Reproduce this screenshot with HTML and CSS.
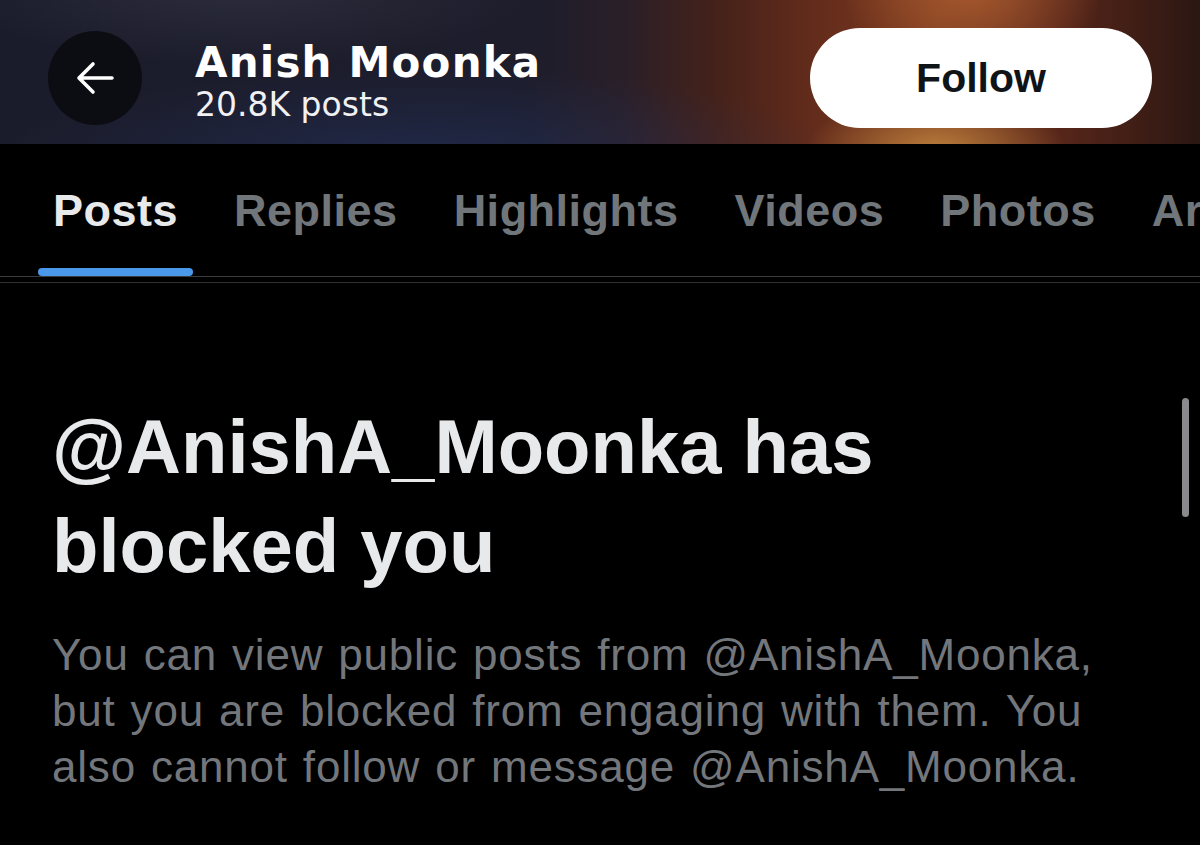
FILE: index.html
```html
<!DOCTYPE html>
<html lang="en">
<head>
<meta charset="utf-8">
<title>Anish Moonka</title>
<link rel="stylesheet" href="styles.css">
</head>
<body>
<header class="topbar">
  <button class="back" aria-label="Back">
    <svg viewBox="0 0 40 40" width="40" height="40" aria-hidden="true">
      <path d="M37 20H4M18 6L4 20l14 14" fill="none" stroke="#ffffff" stroke-width="3.6" stroke-linecap="round" stroke-linejoin="round"/>
    </svg>
  </button>
  <div class="profile">
    <div class="name">Anish Moonka</div>
    <div class="count">20.8K posts</div>
  </div>
  <button class="follow">Follow</button>
</header>
<nav class="tabs">
  <a class="tab active"><span>Posts</span></a>
  <a class="tab"><span>Replies</span></a>
  <a class="tab"><span>Highlights</span></a>
  <a class="tab"><span>Videos</span></a>
  <a class="tab"><span>Photos</span></a>
  <a class="tab"><span>Articles</span></a>
  <a class="tab"><span>Media</span></a>
</nav>
<div class="divider"></div>
<main class="blocked">
  <h1 class="title">@AnishA_Moonka has blocked you</h1>
  <p class="desc">You can view public posts from @AnishA_Moonka, but you are blocked from engaging with them. You also cannot follow or message @AnishA_Moonka.</p>
  <div class="scrollbar"></div>
</main>
</body>
</html>
```
FILE: styles.css
```css
html, body {
  margin: 0;
  padding: 0;
  background: #000000;
  height: 100%;
  overflow: hidden;
}

body {
  font-family: "Liberation Sans", Arial, sans-serif;
  color: #e7e9ea;
  position: relative;
}

.topbar {
  height: 144px;
  box-sizing: border-box;
  padding: 12px 48px 0 48px;
  display: flex;
  align-items: center;
  background:
    radial-gradient(ellipse 130px 55px at 78% 104%, rgba(200, 140, 65, 0.8), rgba(200, 140, 65, 0) 100%),
    radial-gradient(ellipse 130px 90px at 81% -8%, rgba(175, 95, 48, 0.85), rgba(175, 95, 48, 0) 100%),
    radial-gradient(ellipse 420px 90px at 35% 110%, rgba(35, 50, 95, 0.55), rgba(35, 50, 95, 0) 100%),
    radial-gradient(ellipse 300px 80px at 20% -10%, rgba(60, 60, 75, 0.5), rgba(60, 60, 75, 0) 100%),
    linear-gradient(90deg, #1b1c2b 0%, #1d1d2c 44%, #2a1f28 52%, #46221a 60%, #642c1b 68%, #7a3a20 78%, #58261a 88%, #2c1712 100%);
}

.back {
  width: 94px;
  height: 94px;
  flex: 0 0 94px;
  border-radius: 50%;
  border: none;
  padding: 0;
  background: rgba(10, 10, 16, 0.88);
  display: flex;
  align-items: center;
  justify-content: center;
}

.back svg {
  display: block;
}

.profile {
  margin-left: 53px;
  padding-top: 8px;
  display: flex;
  flex-direction: column;
}

.name {
  font-family: "DejaVu Sans", sans-serif;
  font-weight: bold;
  font-size: 42px;
  line-height: 44px;
  letter-spacing: 1.2px;
  color: #ffffff;
  white-space: nowrap;
}

.count {
  font-family: "DejaVu Sans", sans-serif;
  font-size: 33px;
  line-height: 39px;
  color: #f1f1f4;
  white-space: nowrap;
}

.follow {
  margin-left: auto;
  width: 342px;
  height: 100px;
  border: none;
  border-radius: 50px;
  background: #ffffff;
  color: #0f1419;
  font-family: "Liberation Sans", Arial, sans-serif;
  font-weight: bold;
  font-size: 41px;
  padding: 0;
}

.tabs {
  display: flex;
  gap: 26px;
  padding-left: 38px;
  white-space: nowrap;
  overflow: hidden;
  border-bottom: 1px solid #3a3b3f;
}

.tab {
  display: flex;
  flex-direction: column;
  padding: 41px 15px 0;
  font-weight: bold;
  font-size: 45px;
  letter-spacing: 0.5px;
  color: #71767b;
  flex: 0 0 auto;
}

.tab span {
  line-height: 52px;
}

.tab::after {
  content: "";
  display: block;
  height: 8px;
  margin-top: 31px;
  border-radius: 4px;
  margin-left: -15px;
  margin-right: -15px;
}

.tab.active {
  color: #e7e9ea;
}

.tab.active::after {
  background: #4a98e9;
}

.divider {
  height: 1px;
  margin-top: 5px;
  background: #2f3034;
}

.blocked {
  padding: 114px 45px 0 52px;
}

.title {
  margin: 0;
  font-size: 76px;
  line-height: 99px;
  font-weight: bold;
  color: #e7e9ea;
}

.desc {
  margin: 32px 0 0;
  font-size: 44px;
  line-height: 56px;
  letter-spacing: 0.8px;
  word-spacing: 2px;
  color: #73777c;
}

.scrollbar {
  position: absolute;
  right: 11px;
  top: 398px;
  width: 7px;
  height: 119px;
  border-radius: 4px;
  background: #8a8a8d;
}
```
